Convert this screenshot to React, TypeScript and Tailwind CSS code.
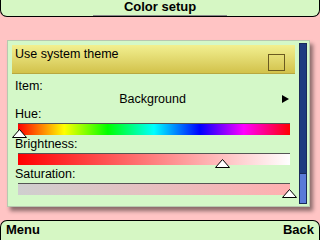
import React from "react";

function Thumb({ left, top }: { left: number; top: number }) {
  return (
    <svg
      className="absolute"
      style={{ left, top }}
      width="15"
      height="9"
      viewBox="0 0 15 9"
    >
      <polygon points="7.5,0.5 14.5,8.5 0.5,8.5" fill="#fff" stroke="#000" strokeWidth="1" />
    </svg>
  );
}

function SliderBar({
  label,
  gradient,
  thumb,
}: {
  label: string;
  gradient: string;
  thumb: number;
}) {
  return (
    <div className="flex flex-col">
      <div className="h-[14px] leading-[14px] pl-[7px]">{label}</div>
      <div className="relative h-[16px] pl-[10px] pr-[9px] pt-[2px]">
        <div className={`h-[12px] border-t border-[#555] ${gradient}`} />
        <Thumb left={thumb} top={8} />
      </div>
    </div>
  );
}

export default function App() {
  return (
    <div
      className="w-[320px] h-[240px] bg-[#ffc4c4] flex flex-col overflow-hidden text-[12.5px] text-black"
      style={{ fontFamily: '"Liberation Sans", Arial, sans-serif' }}
    >
      <div className="h-[17px] bg-[#d6f7c4] border border-t-0 border-black rounded-b-[7px] flex justify-center">
        <div className="font-bold text-[13px] leading-[14px] border-b border-[#888] w-[134px] text-center">
          Color setup
        </div>
      </div>

      <div className="h-[23px]" />

      <div className="flex ml-[7px]">
        <div className="w-[303px] h-[167px] bg-[#d4f8c8] border border-[#b8c8b0] shadow-[3px_4px_4px_rgba(0,0,0,0.45)] flex">
          <div className="flex-1 flex flex-col pt-[4px]">
            <div className="ml-[4px] mr-[4px] h-[29px] bg-gradient-to-b from-[#f2f090] to-[#d2c24a] border-b border-[#b8a840] flex justify-between pl-[3px] pr-[10px]">
              <span className="leading-[14px] pt-[2px]">Use system theme</span>
              <div className="mt-[9px] w-[17px] h-[17px] border border-[#6a5a20]" />
            </div>
            <div className="h-[14px] leading-[14px] pl-[7px] mt-[5px]">Item:</div>
            <div className="h-[14px] leading-[14px] flex items-center pl-[7px] pr-[10px] mt-[-1px]">
              <span className="flex-1 text-center pl-[8px]">Background</span>
              <svg width="7" height="8" viewBox="0 0 7 8">
                <polygon points="0,0 7,4 0,8" fill="#000" />
              </svg>
            </div>
            <div className="mt-[1px]" />
            <SliderBar
              label="Hue:"
              gradient="bg-[linear-gradient(to_right,#ff0000,#ffff00_17%,#00ff00_33%,#00ffff_50%,#0000ff_67%,#ff00ff_83%,#ff0000)]"
              thumb={4}
            />
            <SliderBar
              label="Brightness:"
              gradient="bg-[linear-gradient(to_right,#ff0000,#ffffff)]"
              thumb={207}
            />
            <SliderBar
              label="Saturation:"
              gradient="bg-[linear-gradient(to_right,#cfcfcf,#ffb0b0)]"
              thumb={274}
            />
          </div>
          <div className="w-[8px] mr-[2px] mt-[2px] mb-[2px] border border-[#1a2a5a] bg-[#5a7ad8] flex flex-col">
            <div className="h-[130px] bg-[#1e3c80] border-b border-[#1a2a5a]" />
          </div>
        </div>
      </div>

      <div className="flex-1" />

      <div className="h-[20px] bg-[#d6f7c4] border border-b-0 border-black rounded-t-[7px] flex justify-between px-[5px] font-bold text-[13px] leading-[18px]">
        <span>Menu</span>
        <span>Back</span>
      </div>
    </div>
  );
}
